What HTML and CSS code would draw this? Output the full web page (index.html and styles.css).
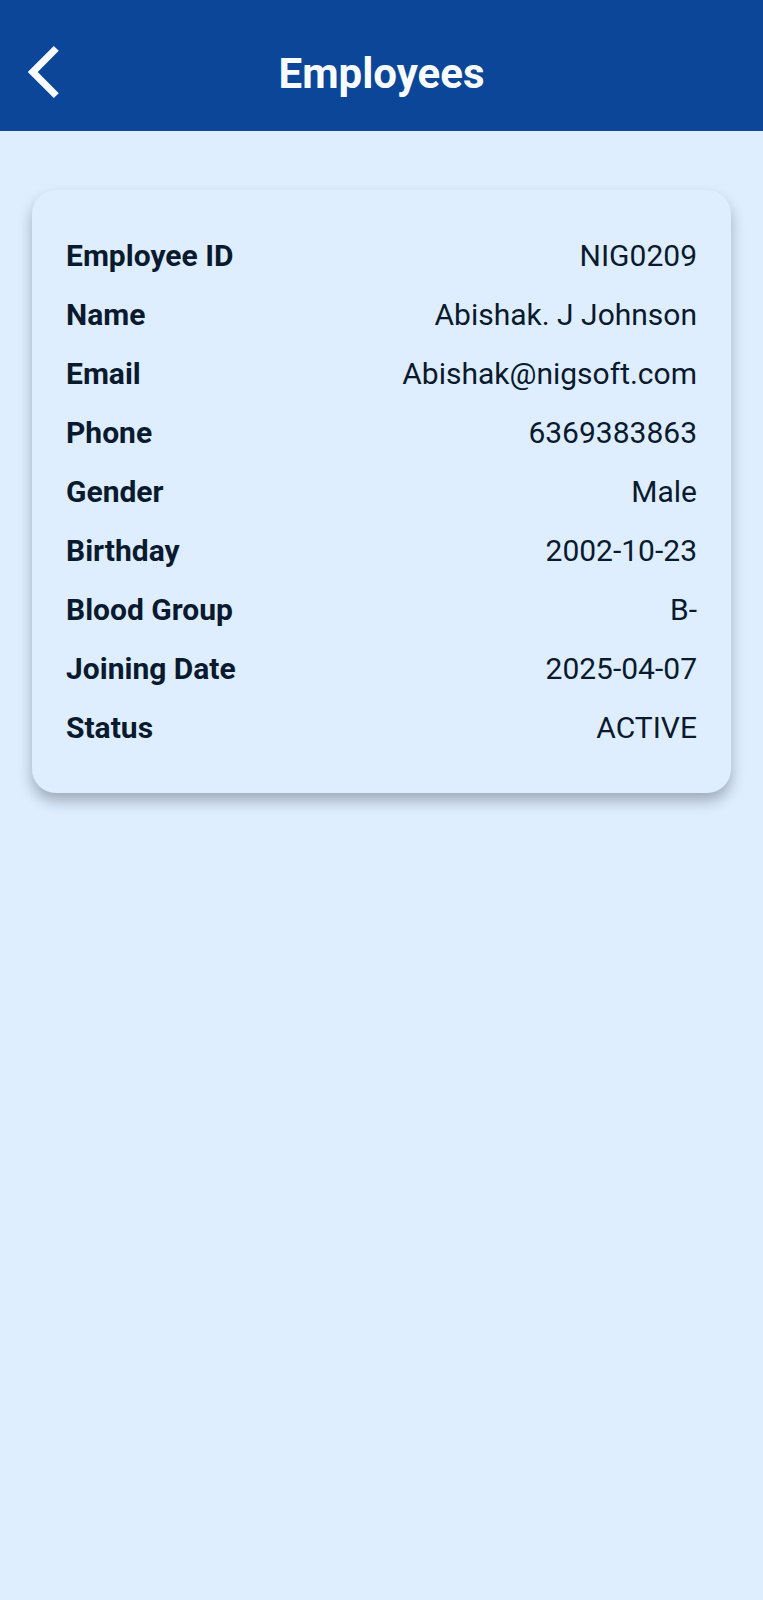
FILE: index.html
```html
<!DOCTYPE html>
<html lang="en">
<head>
  <meta charset="UTF-8" />
  <meta name="viewport" content="width=device-width, initial-scale=1" />
  <title>Employees</title>
  <link rel="stylesheet" href="styles.css">
</head>
<body>
  <header class="header">
    <button class="back" type="button" aria-label="Back">
      <svg width="32" height="54" viewBox="0 0 32 54" aria-hidden="true">
        <path d="M28.3 3.4 L4.8 27 L28.3 50.6" fill="none" stroke="currentColor" stroke-width="7" />
      </svg>
    </button>
    <h1 class="title">Employees</h1>
  </header>

  <main class="content">
    <dl class="card">
      <div class="row"><dt>Employee ID</dt><dd>NIG0209</dd></div>
      <div class="row"><dt>Name</dt><dd>Abishak. J Johnson</dd></div>
      <div class="row"><dt>Email</dt><dd>Abishak@nigsoft.com</dd></div>
      <div class="row"><dt>Phone</dt><dd>6369383863</dd></div>
      <div class="row"><dt>Gender</dt><dd>Male</dd></div>
      <div class="row"><dt>Birthday</dt><dd>2002-10-23</dd></div>
      <div class="row"><dt>Blood Group</dt><dd>B-</dd></div>
      <div class="row"><dt>Joining Date</dt><dd>2025-04-07</dd></div>
      <div class="row"><dt>Status</dt><dd>ACTIVE</dd></div>
    </dl>
  </main>
</body>
</html>
```

FILE: styles.css
```css
body {
  margin: 0;
  min-height: 100vh;
  background: #deeeff;
  color: #0a1a2e;
  font-family: Roboto, sans-serif;
}

.header {
  display: grid;
  grid-template-columns: 32px 1fr 32px;
  align-items: center;
  background: #0b4698;
  color: #f8fcff;
  padding: 42px 28px 29px;
}

.back {
  display: flex;
  padding: 0;
  border: none;
  background: none;
  color: inherit;
  cursor: pointer;
}

.title {
  margin: 0;
  padding-top: 4px;
  font-size: 42px;
  line-height: 56px;
  font-weight: bold;
  text-align: center;
}

.content {
  padding: 59px 32px;
}

.card {
  margin: 0;
  padding: 36px 34px;
  border-radius: 24px;
  background: #deeeff;
  box-shadow: 0 8px 14px rgba(20, 20, 30, 0.3);
}

.row {
  display: flex;
  justify-content: space-between;
  gap: 16px;
  font-size: 30px;
  line-height: 35px;
  padding: 12px 0;
}

.row dt {
  font-weight: bold;
}

.row dd {
  margin: 0;
  text-align: right;
}
```
